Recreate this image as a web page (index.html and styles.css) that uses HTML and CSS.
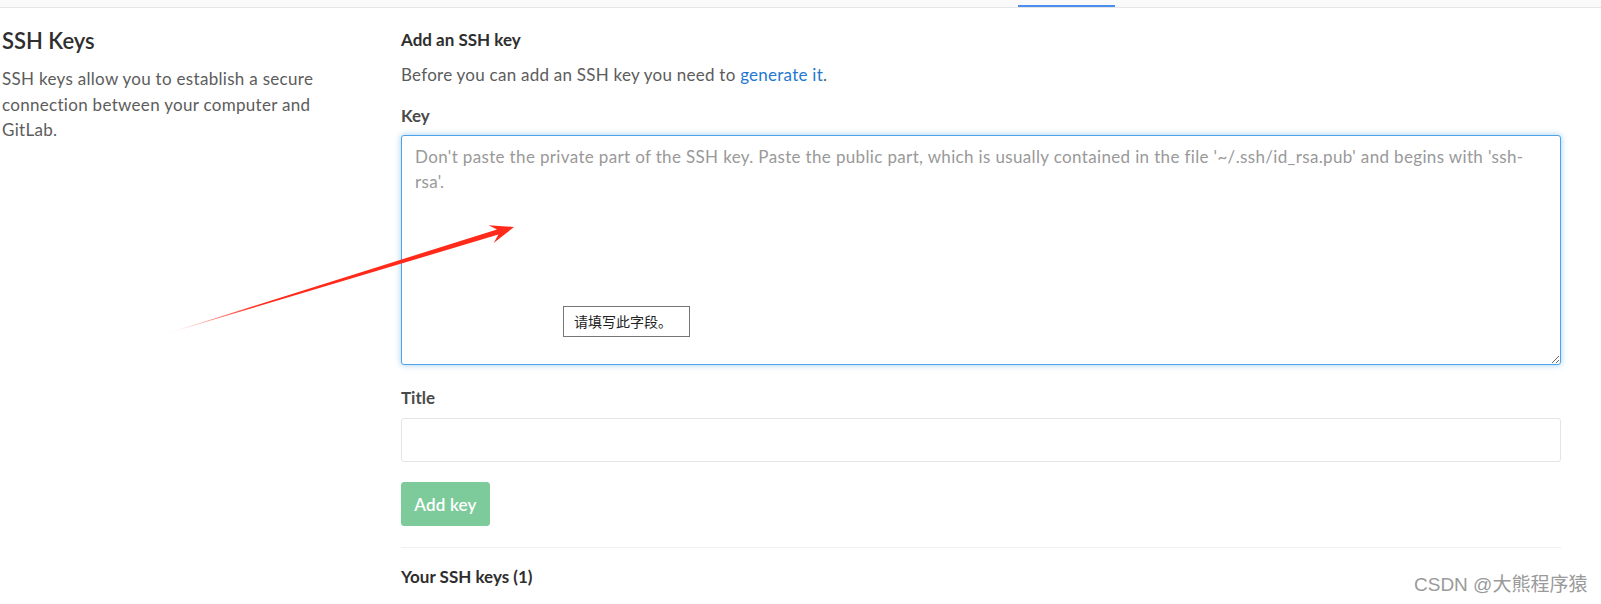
FILE: index.html
```html
<!DOCTYPE html>
<html lang="en">
<head>
<meta charset="utf-8">
<title>SSH Keys</title>
<link rel="stylesheet" href="styles.css">
</head>
<body>
<div class="topbar">
  <div class="tab-active"></div>
</div>
<div class="page">
  <aside class="intro">
    <h4 class="intro-title">SSH Keys</h4>
    <p class="intro-text">SSH keys allow you to establish a secure connection between your computer and GitLab.</p>
  </aside>
  <main class="content">
    <h5 class="section-title">Add an SSH key</h5>
    <p class="help">Before you can add an SSH key you need to <a class="link" href="#">generate it</a>.</p>
    <form class="form">
      <label class="label" for="key">Key</label>
      <div class="field-wrap">
        <textarea id="key" class="textarea" placeholder="Don't paste the private part of the SSH key. Paste the public part, which is usually contained in the file '~/.ssh/id_rsa.pub' and begins with 'ssh-rsa'."></textarea>
        <div class="tooltip">请填写此字段。</div>
      </div>
      <label class="label label-title" for="title">Title</label>
      <input id="title" class="input" type="text">
      <button class="btn" type="button">Add key</button>
    </form>
    <hr class="divider">
    <h5 class="section-title keys-title">Your SSH keys (1)</h5>
  </main>
</div>
<svg class="arrow" width="1601" height="604" viewBox="0 0 1601 604">
  <defs>
    <linearGradient id="fade" gradientUnits="userSpaceOnUse" x1="162" y1="335" x2="260" y2="305">
      <stop offset="0" stop-color="#ff2a1a" stop-opacity="0"/>
      <stop offset="1" stop-color="#ff2a1a" stop-opacity="1"/>
    </linearGradient>
  </defs>
  <polygon fill="url(#fade)" points="162,335 498.4,234.6 493.7,242.9 514,227 488.5,225.3 497,229.4"/>
</svg>
<div class="watermark">CSDN @大熊程序猿</div>
</body>
</html>
```
FILE: styles.css
```css
html, body {
  margin: 0;
  padding: 0;
}
body {
  width: 1601px;
  height: 604px;
  overflow: hidden;
  background: #fff;
  font-family: Lato, "Noto Sans", sans-serif;
  font-size: 17px;
  line-height: 25px;
  color: #2e2e2e;
  position: relative;
}
.topbar {
  height: 7px;
  background: #fafafa;
  border-bottom: 1px solid #e5e5e5;
  display: flex;
  align-items: flex-end;
  padding-left: 1018px;
}
.tab-active {
  width: 97px;
  height: 2px;
  background: #4a8ff0;
}
.page {
  display: flex;
  padding-left: 2px;
}
.intro {
  width: 399px;
  flex: none;
}
.intro-title {
  margin: 18px 0 0;
  font-size: 22px;
  line-height: 30px;
  font-weight: 600;
  color: #2e2e2e;
}
.intro-text {
  margin: 10px 0 0;
  width: 330px;
  font-size: 17px;
  line-height: 25.5px;
  letter-spacing: 0.3px;
  color: #5c5c5c;
}
.content {
  width: 1160px;
  flex: none;
}
.section-title {
  margin: 19px 0 0;
  font-size: 17px;
  line-height: 25px;
  font-weight: 700;
  color: #2e2e2e;
}
.help {
  margin: 10px 0 0;
  letter-spacing: 0.25px;
  color: #5c5c5c;
}
.link {
  color: #1f78d1;
  text-decoration: none;
}
.form {
  display: flex;
  flex-direction: column;
  align-items: flex-start;
}
.label {
  display: block;
  margin-top: 16px;
  font-weight: 700;
  color: #4a4a4a;
}
.field-wrap {
  position: relative;
  margin-top: 7px;
  width: 1160px;
}
.textarea {
  display: block;
  box-sizing: border-box;
  width: 1160px;
  height: 230px;
  margin: 0;
  padding: 8px 26px 8px 13px;
  border: 1px solid #4ea2ea;
  border-radius: 3px;
  box-shadow: 0 0 6px rgba(78, 162, 234, 0.55);
  font-family: Lato, "Noto Sans", sans-serif;
  font-size: 17px;
  line-height: 25px;
  letter-spacing: 0.35px;
  color: #2e2e2e;
  outline: none;
  resize: vertical;
}
.textarea::placeholder {
  color: #999;
  opacity: 1;
}
.tooltip {
  position: absolute;
  left: 162px;
  top: 171px;
  box-sizing: border-box;
  width: 127px;
  height: 31px;
  padding: 0 10px;
  border: 1px solid #767676;
  background: #fff;
  font-family: "Noto Sans CJK SC", sans-serif;
  font-size: 14px;
  line-height: 29px;
  color: #222;
}
.label-title {
  margin-top: 20px;
}
.input {
  display: block;
  box-sizing: border-box;
  width: 1160px;
  height: 44px;
  margin: 8px 0 0;
  border: 1px solid #e5e5e5;
  border-radius: 3px;
  padding: 0 13px;
  font-family: Lato, "Noto Sans", sans-serif;
  font-size: 17px;
}
.btn {
  margin-top: 20px;
  box-sizing: border-box;
  width: 89px;
  height: 44px;
  padding: 0;
  border: 1px solid #7dca9b;
  border-radius: 3px;
  background: #7dca9b;
  color: #fff;
  font-family: Lato, "Noto Sans", sans-serif;
  font-size: 17px;
  font-weight: 600;
  letter-spacing: 0.2px;
}
.divider {
  margin: 21px 0 0;
  border: 0;
  border-top: 1px solid #f0f0f0;
  height: 0;
}
.keys-title {
  margin-top: 16px;
}
.arrow {
  position: absolute;
  left: 0;
  top: 0;
  pointer-events: none;
}
.watermark {
  position: absolute;
  left: 1414px;
  top: 573px;
  font-family: "Liberation Sans", "Noto Sans CJK SC", sans-serif;
  font-size: 19px;
  line-height: 23px;
  color: #9a9a9a;
  text-shadow: 0 0 1px rgba(255,255,255,0.8);
  white-space: nowrap;
}
```
